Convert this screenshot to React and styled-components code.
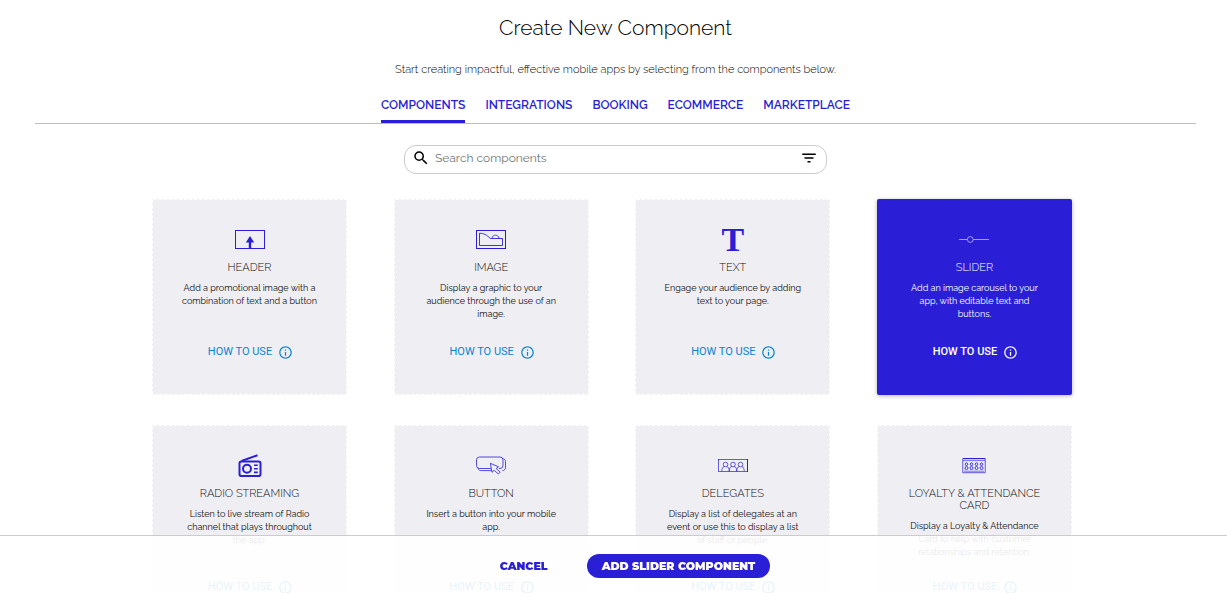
import React, { useState } from 'react'
import styled, { createGlobalStyle } from 'styled-components'
import { MdSearch, MdFilterList, MdInfoOutline } from 'react-icons/md'

const blue = '#2a1fd6'

const components = [
  { name: 'Header', icon: HeaderIcon, text: 'Add a promotional image with a combination of text and a button' },
  { name: 'Image', icon: ImageIcon, text: 'Display a graphic to your audience through the use of an image.' },
  { name: 'Text', icon: TextIcon, text: 'Engage your audience by adding text to your page.' },
  { name: 'Slider', icon: SliderIcon, text: 'Add an image carousel to your app, with editable text and buttons.' },
  { name: 'Radio Streaming', icon: RadioIcon, text: 'Listen to live stream of Radio channel that plays throughout the app.' },
  { name: 'Button', icon: ButtonIcon, text: 'Insert a button into your mobile app.' },
  { name: 'Delegates', icon: DelegatesIcon, text: 'Display a list of delegates at an event or use this to display a list of staff or people.' },
  { name: 'Loyalty & Attendance Card', icon: LoyaltyIcon, text: 'Display a Loyalty & Attendance Card to help with customer relationships and retention.' },
]

const tabs = ['Components', 'Integrations', 'Booking', 'Ecommerce', 'Marketplace']

function HeaderIcon() {
  return (
    <svg width="30" height="20" viewBox="0 0 30 20" fill="none" stroke="currentColor">
      <rect x="0.5" y="0.5" width="29" height="18" />
      <path d="M15 6l4.2 6.5h-3v6h-2.4v-6h-3z" fill="currentColor" stroke="none" />
    </svg>
  )
}

function ImageIcon() {
  return (
    <svg width="30" height="20" viewBox="0 0 30 20" fill="none" stroke="currentColor">
      <rect x="0.5" y="0.5" width="29" height="18" />
      <path d="M3.5 15.5V3.2c4.5.3 6.8 1.3 10.8 5.3h12.2v7z" strokeWidth="0.9" />
      <path d="M16 8.3c.3-4.2 6.7-4.2 7 0" strokeWidth="0.8" />
    </svg>
  )
}

function TextIcon() {
  return <LetterIcon aria-hidden="true">T</LetterIcon>
}

function SliderIcon() {
  return (
    <svg width="30" height="20" viewBox="0 0 30 20" fill="none" stroke="currentColor" strokeWidth="0.8" opacity="0.7">
      <path d="M0 9.5h8.3M14.3 9.5H30" />
      <circle cx="11.3" cy="9.5" r="2.9" />
    </svg>
  )
}

function RadioIcon() {
  return (
    <svg width="24" height="24" viewBox="0 0 24 24" fill="none" stroke="currentColor" strokeWidth="2">
      <rect x="1.5" y="7.5" width="21" height="14.5" rx="1.8" />
      <path d="M3.500 7L19.500 1.200" />
      <circle cx="9" cy="14.7" r="4" />
      <path d="M16 11.2h3.8M16 14.8h3.8M16 18.4h3.8" strokeWidth="1.6" />
    </svg>
  )
}

function ButtonIcon() {
  return (
    <svg width="30" height="20" viewBox="0 0 30 20" fill="none" stroke="currentColor" strokeWidth="0.8">
      <path d="M15 12.5H3.5a3 3 0 0 1-3-3V4a3 3 0 0 1 3-3h20.5a3 3 0 0 1 3 3v5.5a3 3 0 0 1-3 3h-1" />
      <path d="M2 12.2c.6 1.8 1.7 2.4 3.2 2.4H16M27.3 2.7c1.4.5 2.2 1.5 2.2 3v5.5c0 2.2-1.2 3.3-3 3.4" />
      <path d="M14.3 7.3l1.7 9 2.2-2 4.2 3.7 1.8-1.9-4-3.6 2.3-1.7z" />
    </svg>
  )
}

function DelegatesIcon() {
  return (
    <svg width="30" height="20" viewBox="0 0 30 20" fill="none" stroke="currentColor" strokeWidth="0.7">
      <rect x="0.5" y="3.5" width="29" height="12" />
      <path d="M29.5 3v13" strokeWidth="1" />
      {[7.5, 15, 22.5].map((x) => (
        <g key={x}>
          <circle cx={x} cy="8.5" r="2.3" />
          <path d={`M${x - 3.7} 15.3c0-2.8.7-4.3 2.5-4.8M${x + 3.7} 15.3c0-2.8-.7-4.3-2.5-4.8`} />
        </g>
      ))}
    </svg>
  )
}

function LoyaltyIcon() {
  return (
    <svg width="24" height="20" viewBox="0 0 24 20" fill="none" stroke="currentColor">
      <rect x="0.7" y="2.7" width="22.6" height="14" rx="0.5" strokeWidth="1.2" opacity="0.6" />
      <path d="M1 2.5h22" />
      <path d="M1 4.6h22M2 15.2h20" strokeWidth="1" opacity="0.6" />
      {[4.5, 9.5, 14.5, 19.5].map((x) => (
        <g key={x} strokeWidth="0.9">
          <circle cx={x} cy="8.2" r="1.3" />
          <circle cx={x} cy="12" r="1.5" />
        </g>
      ))}
    </svg>
  )
}

function ComponentCard({ item, selected, onSelect }) {
  const Icon = item.icon
  return (
    <Card $selected={selected} onClick={onSelect}>
      <CardIcon $selected={selected}>
        <Icon />
      </CardIcon>
      <CardTitle>{item.name}</CardTitle>
      <CardText>{item.text}</CardText>
      <HowTo href="#how-to-use" $selected={selected}>
        How to use
        <MdInfoOutline size={15} />
      </HowTo>
    </Card>
  )
}

export default function App() {
  const [tab, setTab] = useState('Components')
  const [selected, setSelected] = useState('Slider')

  return (
    <>
      <GlobalStyle />
      <Page>
        <Title>Create New Component</Title>
        <Intro>Start creating impactful, effective mobile apps by selecting from the components below.</Intro>

        <Tabs role="tablist">
          {tabs.map((name) => (
            <Tab key={name} type="button" role="tab" aria-selected={tab === name} $active={tab === name} onClick={() => setTab(name)}>
              {name}
            </Tab>
          ))}
        </Tabs>

        <Search>
          <SearchLabel htmlFor="search" aria-label="Search components">
            <MdSearch size={18} />
          </SearchLabel>
          <SearchInput id="search" type="text" placeholder="Search components" />
          <FilterButton type="button" aria-label="Filter">
            <MdFilterList size={18} />
          </FilterButton>
        </Search>

        <Grid>
          {components.map((item) => (
            <ComponentCard
              key={item.name}
              item={item}
              selected={selected === item.name}
              onSelect={() => setSelected(item.name)}
            />
          ))}
        </Grid>
      </Page>

      <Footer>
        <CancelButton type="button">Cancel</CancelButton>
        <AddButton type="button">Add {selected} Component</AddButton>
      </Footer>
    </>
  )
}

const GlobalStyle = createGlobalStyle`
  * {
    box-sizing: border-box;
  }

  html {
    scrollbar-width: none;
  }

  body {
    margin: 0;
    background: #fff;
    color: #222;
    font-family: Raleway, Lato, sans-serif;
  }

  button, input {
    font-family: inherit;
  }
`

const Page = styled.main`
  padding: 14px 31px 80px 35px;
`

const Title = styled.h1`
  margin: 0;
  font-size: 21px;
  line-height: 28px;
  font-weight: 300;
  text-align: center;
  color: #000;
`

const Intro = styled.p`
  margin: 19px 0 0;
  font-size: 11px;
  line-height: 18px;
  font-weight: 300;
  text-align: center;
  color: #000;
`

const Tabs = styled.div`
  display: flex;
  justify-content: center;
  gap: 20px;
  margin-top: 7px;
  border-bottom: 1px solid #bdbdbd;
`

const Tab = styled.button`
  padding: 11px 0 7px;
  border: 0;
  border-bottom: 3px solid ${(props) => (props.$active ? blue : 'transparent')};
  background: none;
  color: ${blue};
  font-size: 12px;
  line-height: 16px;
  font-weight: 600;
  text-transform: uppercase;
  cursor: pointer;
`

const Search = styled.div`
  display: flex;
  align-items: center;
  width: 423px;
  max-width: 100%;
  height: 29px;
  margin: 21px auto 25px;
  padding: 0 8px 3px 7px;
  border: 1px solid #ccc;
  border-radius: 12px;
`

const SearchLabel = styled.label`
  display: flex;
  color: #000;
`

const SearchInput = styled.input`
  flex: 1;
  min-width: 0;
  padding: 0 5px;
  border: 0;
  outline: 0;
  background: none;
  font-size: 12px;
  font-weight: 400;

  &::placeholder {
    color: #757575;
  }
`

const FilterButton = styled.button`
  display: flex;
  padding: 0;
  border: 0;
  background: none;
  color: #000;
  cursor: pointer;
`

const Grid = styled.section`
  display: grid;
  grid-template-columns: repeat(auto-fit, 195px);
  justify-content: space-between;
  gap: 30px 40px;
  max-width: 927px;
  margin: 0 auto;
  padding-right: 7px;
`

const Card = styled.article`
  display: flex;
  flex-direction: column;
  align-items: center;
  min-height: 196px;
  padding: 24px 27px 34px;
  border: 1px dashed ${(props) => (props.$selected ? blue : '#fff')};
  border-radius: 2px;
  background: ${(props) => (props.$selected ? blue : '#efeef3')};
  color: ${(props) => (props.$selected ? '#fff' : '#111')};
  box-shadow: ${(props) => (props.$selected ? '0 1px 4px rgba(0, 0, 0, 0.3)' : 'none')};
  text-align: center;
  cursor: pointer;
`

const CardIcon = styled.div`
  display: flex;
  align-items: center;
  justify-content: center;
  height: 32px;
  color: ${(props) => (props.$selected ? '#fff' : blue)};
`

const LetterIcon = styled.span`
  font-family: 'Liberation Serif', serif;
  font-size: 34px;
  line-height: 32px;
  font-weight: 700;
`

const CardTitle = styled.h2`
  margin: 6px 0 8px;
  font-size: 11px;
  line-height: 12px;
  font-weight: 300;
  text-transform: uppercase;
`

const CardText = styled.p`
  margin: 0 0 20px;
  font-size: 9px;
  line-height: 13px;
`

const HowTo = styled.a`
  display: flex;
  align-items: center;
  gap: 6px;
  margin-top: auto;
  padding-left: 2px;
  color: ${(props) => (props.$selected ? '#fff' : '#0a84d0')};
  font-family: Roboto, sans-serif;
  font-size: 11px;
  line-height: 16px;
  font-weight: ${(props) => (props.$selected ? 500 : 400)};
  text-decoration: none;
  text-transform: uppercase;
`

const Footer = styled.footer`
  position: fixed;
  right: 0;
  bottom: 0;
  left: 0;
  display: flex;
  align-items: center;
  justify-content: center;
  padding: 18px 31px 15px 35px;
  border-top: 1px solid #ccc;
  background: rgba(255, 255, 255, 0.9);
`

const CancelButton = styled.button`
  padding: 0 39px;
  border: 0;
  background: none;
  color: ${blue};
  font-family: Montserrat, Raleway, sans-serif;
  font-size: 11px;
  line-height: 24px;
  font-weight: 900;
  text-transform: uppercase;
  cursor: pointer;
`

const AddButton = styled.button`
  padding: 0 15px;
  border: 0;
  border-radius: 12px;
  background: ${blue};
  color: #fff;
  font-family: Montserrat, Raleway, sans-serif;
  font-size: 11px;
  line-height: 24px;
  font-weight: 900;
  text-transform: uppercase;
  cursor: pointer;
`
